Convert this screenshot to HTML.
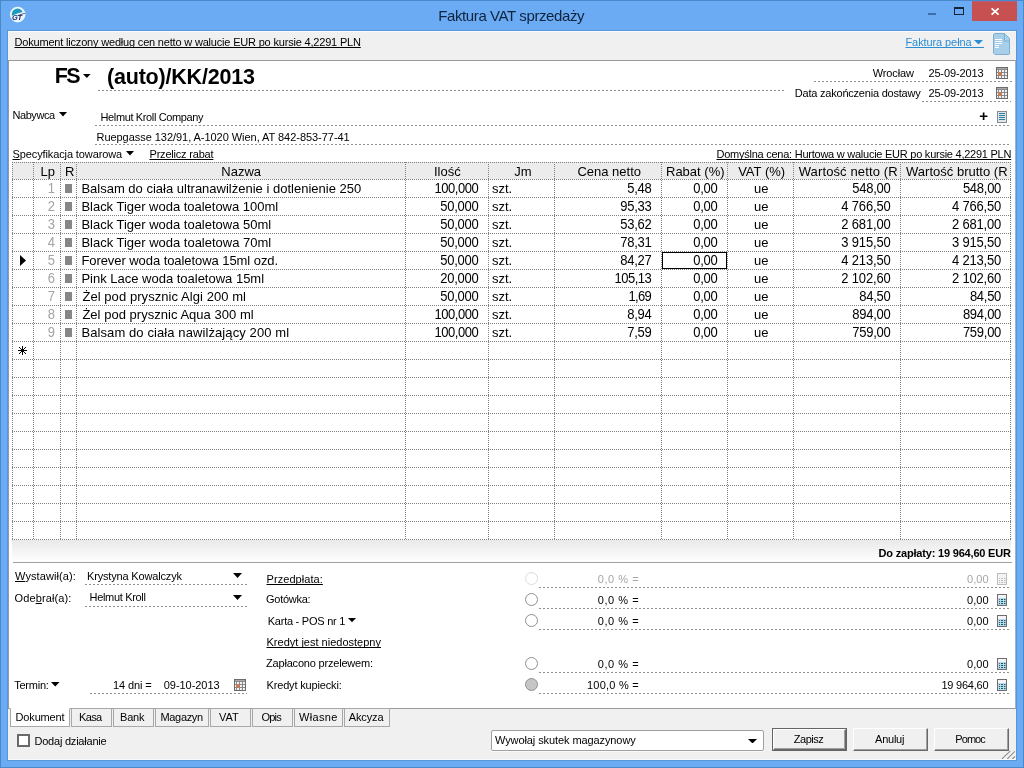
<!DOCTYPE html>
<html><head><meta charset="utf-8"><title>Faktura VAT sprzedaży</title>
<style>
html,body{margin:0;padding:0;}
body{width:1024px;height:768px;overflow:hidden;background:#6babf4;position:relative;font-family:"Liberation Sans",sans-serif;color:#000;}
*{box-sizing:border-box;}
.a{position:absolute;white-space:nowrap;}
.u{text-decoration:underline;text-decoration-thickness:1px;text-decoration-skip-ink:none;}
.dash{position:absolute;height:1px;background-image:repeating-linear-gradient(90deg,#909090 0 2px,transparent 2px 4px);}
.hl{position:absolute;height:1px;background-image:repeating-linear-gradient(90deg,#808080 0 1px,transparent 1px 2px);}
.vl{position:absolute;width:1px;background-image:repeating-linear-gradient(180deg,#808080 0 1px,transparent 1px 2px);}
.tri{position:absolute;width:0;height:0;border-left:4.5px solid transparent;border-right:4.5px solid transparent;border-top:5px solid #000;}
.btn{position:absolute;height:23px;width:75px;background:#f0f0f0;border-top:1px solid #fff;border-left:1px solid #fff;border-right:1px solid #696969;border-bottom:1px solid #696969;box-shadow:inset -1px -1px 0 #a0a0a0;}
.tab{position:absolute;top:708px;height:19px;border:1px solid #a8a8a8;background:#f0f0f0;}
.radio{position:absolute;width:13px;height:13px;border-radius:50%;border:1.5px solid #8e8e8e;background:#fff;}
</style></head><body><div id="win" style="position:absolute;left:0;top:0;width:1024px;height:768px;will-change:transform;">

<div class="a" style="left:0;top:0;width:1024px;height:768px;border:1px solid #4a88cc;"></div>
<div class="a" style="left:7px;top:30px;width:1010px;height:731px;border:1px solid #5b95d9;"></div>
<div class="a" style="left:438.30px;top:7px;font-size:15px;line-height:18px;letter-spacing:-0.400px;color:#10233c;">Faktura VAT sprzedaży</div>
<svg class="a" style="left:9px;top:6px" width="18" height="18" viewBox="0 0 18 18"><circle cx="8.7" cy="8.6" r="7.8" fill="#eaf5fd"/><path d="M3 9.700A5.700 5.700 0 0 1 13.700 5.900Q8 7 3 9.700z" fill="#1d9bbb"/><path d="M8.500 9.300L16.300 6.800L16.600 7.300L9 10z" fill="#1a2a66"/><text x="3" y="13.600" font-size="7.4" font-weight="bold" font-style="italic" fill="#1a2a66" font-family="Liberation Sans, sans-serif" letter-spacing="-0.2">GT</text></svg>
<div class="a" style="left:972px;top:1px;width:45px;height:20px;background:#c75050;border-top:1px solid #b0607c;"></div>
<svg class="a" style="left:972px;top:1px" width="45" height="20"><path d="M19.6 7.3l7 6.4M26.6 7.3l-7 6.4" stroke="#fff" stroke-width="1.8" fill="none"/></svg>
<div class="a" style="left:928px;top:13px;width:8px;height:2px;background:#3f6ea8;"></div>
<div class="a" style="left:954px;top:7px;width:10px;height:8px;border:1px solid #14243c;border-top-width:2px;"></div>
<div class="a" style="left:8px;top:31px;width:1008px;height:729px;background:#f0f0f0;"></div>
<div class="a" style="left:8px;top:31px;width:1008px;height:1px;background:#f8fcff;"></div>
<div class="a" style="left:8px;top:60px;width:1008px;height:649px;background:#fff;border:1px solid #9a9a9a;border-left-color:#8f9bab;border-right-color:#9fb3cc;"></div>
<div class="a" style="left:12px;top:540px;width:999px;height:22px;background:linear-gradient(#e9e9e9,#ffffff);"></div>
<div class="a" style="left:13px;top:562px;width:999px;height:1px;background:#a0a0a0;"></div>
<div class="a u" style="left:14.50px;top:36px;font-size:11px;line-height:13px;letter-spacing:-0.186px;">Dokument liczony według cen netto w walucie EUR po kursie 4,2291 PLN</div>
<div class="a u" style="left:905.50px;top:36px;font-size:11px;line-height:13px;letter-spacing:-0.095px;color:#2a8dd4;">Faktura pełna</div>
<svg class="a" style="left:974.3px;top:39.5px" width="9" height="4.5"><path d="M0 0h9L4.5 4.5z" fill="#2a8dd4"/></svg>
<div class="a" style="left:970px;top:47px;width:14px;height:1px;background:#2a8dd4;"></div>
<svg class="a" style="left:993px;top:33px" width="17" height="22" viewBox="0 0 17 22"><path d="M2 .5h9.500l5 5v15.500l-.8.500h-13.700l-1.500-1.500v-18.500z" fill="#a7cfea" stroke="#7eaed0"/><path d="M11.500 .5v7.500h5" fill="#a6d5f4" stroke="#7eaed0"/><path d="M2 6.500h7M2 8.500h7M2 10.500h7M2 12.500h4M2 14.500h4" stroke="#fff" stroke-width="1"/></svg>
<div class="a" style="left:54.75px;top:63px;font-size:21.5px;line-height:26px;letter-spacing:-1.583px;font-weight:bold;">FS</div>
<svg class="a" style="left:83.3px;top:74px" width="7.6" height="4"><path d="M0 0h7.6L3.8 4z" fill="#000"/></svg>
<div class="a" style="left:107.00px;top:64px;font-size:21.5px;line-height:26px;letter-spacing:-0.198px;font-weight:bold;">(auto)/KK/2013</div>
<div class="dash" style="left:98px;top:90px;width:686px;"></div>
<div class="a" style="left:872.75px;top:67px;font-size:11px;line-height:13px;letter-spacing:-0.129px;">Wrocław</div>
<div class="a" style="left:928.40px;top:67px;font-size:11px;line-height:13px;letter-spacing:-0.128px;">25-09-2013</div>
<div class="dash" style="left:814px;top:81px;width:198px;"></div>
<div class="a" style="left:794.75px;top:87px;font-size:11px;line-height:13px;letter-spacing:-0.211px;">Data zakończenia dostawy</div>
<div class="a" style="left:928.40px;top:87px;font-size:11px;line-height:13px;letter-spacing:-0.128px;">25-09-2013</div>
<div class="dash" style="left:922px;top:101px;width:89px;"></div>
<svg class="a" style="left:996px;top:67px" width="12" height="12" viewBox="0 0 12 12"><rect width="12" height="12" fill="#888"/><rect x="1" y="1" width="10" height="1" fill="#aaa"/><g fill="#f3f3f3"><rect x="1" y="3" width="1" height="2"/><rect x="3" y="3" width="2" height="2"/><rect x="6" y="3" width="2" height="2"/><rect x="9" y="3" width="2" height="2"/><rect x="1" y="6" width="1" height="2"/><rect x="3" y="6" width="2" height="2"/><rect x="6" y="6" width="2" height="2"/><rect x="9" y="6" width="2" height="2"/><rect x="1" y="9" width="1" height="2"/><rect x="3" y="9" width="2" height="2"/><rect x="6" y="9" width="2" height="2"/><rect x="9" y="9" width="2" height="2"/></g><circle cx="3.9" cy="7" r="2" fill="#d27c52"/><rect x=".5" y=".5" width="11" height="11" fill="none" stroke="#6c6c6c"/></svg>
<svg class="a" style="left:996px;top:87px" width="12" height="12" viewBox="0 0 12 12"><rect width="12" height="12" fill="#888"/><rect x="1" y="1" width="10" height="1" fill="#aaa"/><g fill="#f3f3f3"><rect x="1" y="3" width="1" height="2"/><rect x="3" y="3" width="2" height="2"/><rect x="6" y="3" width="2" height="2"/><rect x="9" y="3" width="2" height="2"/><rect x="1" y="6" width="1" height="2"/><rect x="3" y="6" width="2" height="2"/><rect x="6" y="6" width="2" height="2"/><rect x="9" y="6" width="2" height="2"/><rect x="1" y="9" width="1" height="2"/><rect x="3" y="9" width="2" height="2"/><rect x="6" y="9" width="2" height="2"/><rect x="9" y="9" width="2" height="2"/></g><circle cx="3.9" cy="7" r="2" fill="#d27c52"/><rect x=".5" y=".5" width="11" height="11" fill="none" stroke="#6c6c6c"/></svg>
<div class="a" style="left:12.50px;top:109px;font-size:11px;line-height:13px;letter-spacing:-0.437px;">Nabywca</div>
<svg class="a" style="left:59px;top:112px" width="8" height="4.5"><path d="M0 0h8L4.0 4.5z" fill="#000"/></svg>
<div class="a" style="left:100.50px;top:111px;font-size:11px;line-height:13px;letter-spacing:-0.370px;">Helmut Kroll Company</div>
<div class="dash" style="left:95px;top:125px;width:916px;"></div>
<div class="a" style="left:979.3px;top:108px;font-size:15px;line-height:16px;font-weight:bold;">+</div>
<svg class="a" style="left:997px;top:111px" width="10" height="12" viewBox="0 0 10 12"><rect x=".5" y=".5" width="9" height="11" fill="#dde7ec" stroke="#8a8a8a"/><path d="M2 2.500h6M2 4.500h6M2 6.500h6M2 8.500h6" stroke="#2d7f9f"/></svg>
<div class="a" style="left:96.50px;top:131px;font-size:11px;line-height:13px;letter-spacing:-0.044px;">Ruepgasse 132/91, A-1020 Wien, AT 842-853-77-41</div>
<div class="dash" style="left:95px;top:144px;width:916px;"></div>
<div class="a" style="left:12.50px;top:148px;font-size:11px;line-height:13px;letter-spacing:-0.113px;"><span class="u">S</span>pecyfikacja towarowa</div>
<svg class="a" style="left:126px;top:151px" width="8" height="4.5"><path d="M0 0h8L4.0 4.5z" fill="#000"/></svg>
<div class="a u" style="left:149.50px;top:148px;font-size:11px;line-height:13px;letter-spacing:-0.198px;">Przelicz rabat</div>
<div class="a u" style="left:716.50px;top:148px;font-size:11px;line-height:13px;letter-spacing:-0.247px;">Domyślna cena: Hurtowa w walucie EUR po kursie 4,2291 PLN</div>
<div class="a" style="left:12px;top:162px;width:998px;height:17px;background:#ececec;"></div>
<div class="hl" style="left:12px;top:162px;width:999px;"></div>
<div class="hl" style="left:12px;top:179px;width:999px;"></div>
<div class="hl" style="left:12px;top:197px;width:999px;"></div>
<div class="hl" style="left:12px;top:215px;width:999px;"></div>
<div class="hl" style="left:12px;top:233px;width:999px;"></div>
<div class="hl" style="left:12px;top:251px;width:999px;"></div>
<div class="hl" style="left:12px;top:269px;width:999px;"></div>
<div class="hl" style="left:12px;top:287px;width:999px;"></div>
<div class="hl" style="left:12px;top:305px;width:999px;"></div>
<div class="hl" style="left:12px;top:323px;width:999px;"></div>
<div class="hl" style="left:12px;top:341px;width:999px;"></div>
<div class="hl" style="left:12px;top:359px;width:999px;"></div>
<div class="hl" style="left:12px;top:377px;width:999px;"></div>
<div class="hl" style="left:12px;top:395px;width:999px;"></div>
<div class="hl" style="left:12px;top:413px;width:999px;"></div>
<div class="hl" style="left:12px;top:431px;width:999px;"></div>
<div class="hl" style="left:12px;top:449px;width:999px;"></div>
<div class="hl" style="left:12px;top:467px;width:999px;"></div>
<div class="hl" style="left:12px;top:485px;width:999px;"></div>
<div class="hl" style="left:12px;top:503px;width:999px;"></div>
<div class="hl" style="left:12px;top:521px;width:999px;"></div>
<div class="hl" style="left:12px;top:539px;width:999px;"></div>
<div class="vl" style="left:12px;top:162px;height:378px;"></div>
<div class="vl" style="left:33px;top:162px;height:378px;"></div>
<div class="vl" style="left:60px;top:162px;height:378px;"></div>
<div class="vl" style="left:76px;top:162px;height:378px;"></div>
<div class="vl" style="left:405px;top:162px;height:378px;"></div>
<div class="vl" style="left:488px;top:162px;height:378px;"></div>
<div class="vl" style="left:554px;top:162px;height:378px;"></div>
<div class="vl" style="left:661px;top:162px;height:378px;"></div>
<div class="vl" style="left:727px;top:162px;height:378px;"></div>
<div class="vl" style="left:793px;top:162px;height:378px;"></div>
<div class="vl" style="left:900px;top:162px;height:378px;"></div>
<div class="vl" style="left:1010px;top:162px;height:378px;"></div>
<div class="a" style="left:40.49px;top:164px;font-size:13px;line-height:15px;letter-spacing:0.000px;">Lp</div>
<div class="a" style="left:64.90px;top:164px;font-size:13px;line-height:15px;letter-spacing:0.000px;">R</div>
<div class="a" style="left:221.35px;top:164px;font-size:13px;line-height:15px;letter-spacing:0.000px;">Nazwa</div>
<div class="a" style="left:433.99px;top:164px;font-size:13px;line-height:15px;letter-spacing:0.000px;">Ilość</div>
<div class="a" style="left:514.35px;top:164px;font-size:13px;line-height:15px;letter-spacing:0.000px;">Jm</div>
<div class="a" style="left:577.41px;top:164px;font-size:13px;line-height:15px;letter-spacing:0.000px;">Cena netto</div>
<div class="a" style="left:666.01px;top:164px;font-size:13px;line-height:15px;letter-spacing:0.000px;">Rabat (%)</div>
<div class="a" style="left:738.17px;top:164px;font-size:13px;line-height:15px;letter-spacing:0.000px;">VAT (%)</div>
<div class="a" style="left:798.70px;top:164px;font-size:13px;line-height:15px;letter-spacing:0.123px;">Wartość netto (R</div>
<div class="a" style="left:906.00px;top:164px;font-size:13px;line-height:15px;letter-spacing:0.014px;">Wartość brutto (R</div>
<div class="a" style="left:47.80px;top:181px;font-size:13px;line-height:15px;letter-spacing:0.000px;color:#a4a4a4;transform:scaleY(1.111);transform-origin:0 12px;">1</div>
<div class="a" style="left:65px;top:184px;width:7px;height:9px;background:#868686;"></div>
<div class="a" style="left:81.40px;top:181px;font-size:13px;line-height:15px;letter-spacing:0.003px;">Balsam do ciała ultranawilżenie i dotlenienie 250</div>
<div class="a" style="left:434.50px;top:181px;font-size:13px;line-height:15px;letter-spacing:-0.460px;transform:scaleY(1.111);transform-origin:0 12px;">100,000</div>
<div class="a" style="left:491.90px;top:181px;font-size:13px;line-height:15px;letter-spacing:0.000px;">szt.</div>
<div class="a" style="left:627.30px;top:181px;font-size:13px;line-height:15px;letter-spacing:-0.291px;transform:scaleY(1.111);transform-origin:0 12px;">5,48</div>
<div class="a" style="left:693.30px;top:181px;font-size:13px;line-height:15px;letter-spacing:-0.291px;transform:scaleY(1.111);transform-origin:0 12px;">0,00</div>
<div class="a" style="left:754.09px;top:181px;font-size:13px;line-height:15px;letter-spacing:0.000px;">ue</div>
<div class="a" style="left:852.30px;top:181px;font-size:13px;line-height:15px;letter-spacing:-0.266px;transform:scaleY(1.111);transform-origin:0 12px;">548,00</div>
<div class="a" style="left:962.90px;top:181px;font-size:13px;line-height:15px;letter-spacing:-0.266px;transform:scaleY(1.111);transform-origin:0 12px;">548,00</div>
<div class="a" style="left:47.80px;top:199px;font-size:13px;line-height:15px;letter-spacing:0.000px;color:#a4a4a4;transform:scaleY(1.111);transform-origin:0 12px;">2</div>
<div class="a" style="left:65px;top:202px;width:7px;height:9px;background:#868686;"></div>
<div class="a" style="left:81.40px;top:199px;font-size:13px;line-height:15px;letter-spacing:-0.017px;">Black Tiger woda toaletowa 100ml</div>
<div class="a" style="left:440.30px;top:199px;font-size:13px;line-height:15px;letter-spacing:-0.266px;transform:scaleY(1.111);transform-origin:0 12px;">50,000</div>
<div class="a" style="left:491.90px;top:199px;font-size:13px;line-height:15px;letter-spacing:0.000px;">szt.</div>
<div class="a" style="left:620.30px;top:199px;font-size:13px;line-height:15px;letter-spacing:-0.275px;transform:scaleY(1.111);transform-origin:0 12px;">95,33</div>
<div class="a" style="left:693.30px;top:199px;font-size:13px;line-height:15px;letter-spacing:-0.291px;transform:scaleY(1.111);transform-origin:0 12px;">0,00</div>
<div class="a" style="left:754.09px;top:199px;font-size:13px;line-height:15px;letter-spacing:0.000px;">ue</div>
<div class="a" style="left:841.30px;top:199px;font-size:13px;line-height:15px;letter-spacing:-0.168px;transform:scaleY(1.111);transform-origin:0 12px;">4 766,50</div>
<div class="a" style="left:951.90px;top:199px;font-size:13px;line-height:15px;letter-spacing:-0.168px;transform:scaleY(1.111);transform-origin:0 12px;">4 766,50</div>
<div class="a" style="left:47.80px;top:217px;font-size:13px;line-height:15px;letter-spacing:0.000px;color:#a4a4a4;transform:scaleY(1.111);transform-origin:0 12px;">3</div>
<div class="a" style="left:65px;top:220px;width:7px;height:9px;background:#868686;"></div>
<div class="a" style="left:81.40px;top:217px;font-size:13px;line-height:15px;letter-spacing:-0.010px;">Black Tiger woda toaletowa 50ml</div>
<div class="a" style="left:440.30px;top:217px;font-size:13px;line-height:15px;letter-spacing:-0.266px;transform:scaleY(1.111);transform-origin:0 12px;">50,000</div>
<div class="a" style="left:491.90px;top:217px;font-size:13px;line-height:15px;letter-spacing:0.000px;">szt.</div>
<div class="a" style="left:620.30px;top:217px;font-size:13px;line-height:15px;letter-spacing:-0.275px;transform:scaleY(1.111);transform-origin:0 12px;">53,62</div>
<div class="a" style="left:693.30px;top:217px;font-size:13px;line-height:15px;letter-spacing:-0.291px;transform:scaleY(1.111);transform-origin:0 12px;">0,00</div>
<div class="a" style="left:754.09px;top:217px;font-size:13px;line-height:15px;letter-spacing:0.000px;">ue</div>
<div class="a" style="left:841.30px;top:217px;font-size:13px;line-height:15px;letter-spacing:-0.168px;transform:scaleY(1.111);transform-origin:0 12px;">2 681,00</div>
<div class="a" style="left:951.90px;top:217px;font-size:13px;line-height:15px;letter-spacing:-0.168px;transform:scaleY(1.111);transform-origin:0 12px;">2 681,00</div>
<div class="a" style="left:47.80px;top:235px;font-size:13px;line-height:15px;letter-spacing:0.000px;color:#a4a4a4;transform:scaleY(1.111);transform-origin:0 12px;">4</div>
<div class="a" style="left:65px;top:238px;width:7px;height:9px;background:#868686;"></div>
<div class="a" style="left:81.40px;top:235px;font-size:13px;line-height:15px;letter-spacing:-0.010px;">Black Tiger woda toaletowa 70ml</div>
<div class="a" style="left:440.30px;top:235px;font-size:13px;line-height:15px;letter-spacing:-0.266px;transform:scaleY(1.111);transform-origin:0 12px;">50,000</div>
<div class="a" style="left:491.90px;top:235px;font-size:13px;line-height:15px;letter-spacing:0.000px;">szt.</div>
<div class="a" style="left:620.30px;top:235px;font-size:13px;line-height:15px;letter-spacing:-0.275px;transform:scaleY(1.111);transform-origin:0 12px;">78,31</div>
<div class="a" style="left:693.30px;top:235px;font-size:13px;line-height:15px;letter-spacing:-0.291px;transform:scaleY(1.111);transform-origin:0 12px;">0,00</div>
<div class="a" style="left:754.09px;top:235px;font-size:13px;line-height:15px;letter-spacing:0.000px;">ue</div>
<div class="a" style="left:841.30px;top:235px;font-size:13px;line-height:15px;letter-spacing:-0.168px;transform:scaleY(1.111);transform-origin:0 12px;">3 915,50</div>
<div class="a" style="left:951.90px;top:235px;font-size:13px;line-height:15px;letter-spacing:-0.168px;transform:scaleY(1.111);transform-origin:0 12px;">3 915,50</div>
<div class="a" style="left:47.80px;top:253px;font-size:13px;line-height:15px;letter-spacing:0.000px;color:#a4a4a4;transform:scaleY(1.111);transform-origin:0 12px;">5</div>
<div class="a" style="left:65px;top:256px;width:7px;height:9px;background:#868686;"></div>
<div class="a" style="left:81.40px;top:253px;font-size:13px;line-height:15px;letter-spacing:-0.065px;">Forever woda toaletowa 15ml ozd.</div>
<div class="a" style="left:440.30px;top:253px;font-size:13px;line-height:15px;letter-spacing:-0.266px;transform:scaleY(1.111);transform-origin:0 12px;">50,000</div>
<div class="a" style="left:491.90px;top:253px;font-size:13px;line-height:15px;letter-spacing:0.000px;">szt.</div>
<div class="a" style="left:620.30px;top:253px;font-size:13px;line-height:15px;letter-spacing:-0.275px;transform:scaleY(1.111);transform-origin:0 12px;">84,27</div>
<div class="a" style="left:693.30px;top:253px;font-size:13px;line-height:15px;letter-spacing:-0.291px;transform:scaleY(1.111);transform-origin:0 12px;">0,00</div>
<div class="a" style="left:754.09px;top:253px;font-size:13px;line-height:15px;letter-spacing:0.000px;">ue</div>
<div class="a" style="left:841.30px;top:253px;font-size:13px;line-height:15px;letter-spacing:-0.168px;transform:scaleY(1.111);transform-origin:0 12px;">4 213,50</div>
<div class="a" style="left:951.90px;top:253px;font-size:13px;line-height:15px;letter-spacing:-0.168px;transform:scaleY(1.111);transform-origin:0 12px;">4 213,50</div>
<div class="a" style="left:47.80px;top:271px;font-size:13px;line-height:15px;letter-spacing:0.000px;color:#a4a4a4;transform:scaleY(1.111);transform-origin:0 12px;">6</div>
<div class="a" style="left:65px;top:274px;width:7px;height:9px;background:#868686;"></div>
<div class="a" style="left:81.40px;top:271px;font-size:13px;line-height:15px;letter-spacing:-0.005px;">Pink Lace woda toaletowa 15ml</div>
<div class="a" style="left:440.30px;top:271px;font-size:13px;line-height:15px;letter-spacing:-0.266px;transform:scaleY(1.111);transform-origin:0 12px;">20,000</div>
<div class="a" style="left:491.90px;top:271px;font-size:13px;line-height:15px;letter-spacing:0.000px;">szt.</div>
<div class="a" style="left:614.50px;top:271px;font-size:13px;line-height:15px;letter-spacing:-0.506px;transform:scaleY(1.111);transform-origin:0 12px;">105,13</div>
<div class="a" style="left:693.30px;top:271px;font-size:13px;line-height:15px;letter-spacing:-0.291px;transform:scaleY(1.111);transform-origin:0 12px;">0,00</div>
<div class="a" style="left:754.09px;top:271px;font-size:13px;line-height:15px;letter-spacing:0.000px;">ue</div>
<div class="a" style="left:841.30px;top:271px;font-size:13px;line-height:15px;letter-spacing:-0.168px;transform:scaleY(1.111);transform-origin:0 12px;">2 102,60</div>
<div class="a" style="left:951.90px;top:271px;font-size:13px;line-height:15px;letter-spacing:-0.168px;transform:scaleY(1.111);transform-origin:0 12px;">2 102,60</div>
<div class="a" style="left:47.80px;top:289px;font-size:13px;line-height:15px;letter-spacing:0.000px;color:#a4a4a4;transform:scaleY(1.111);transform-origin:0 12px;">7</div>
<div class="a" style="left:65px;top:292px;width:7px;height:9px;background:#868686;"></div>
<div class="a" style="left:82.40px;top:289px;font-size:13px;line-height:15px;letter-spacing:0.064px;">Żel pod prysznic Algi 200 ml</div>
<div class="a" style="left:440.30px;top:289px;font-size:13px;line-height:15px;letter-spacing:-0.266px;transform:scaleY(1.111);transform-origin:0 12px;">50,000</div>
<div class="a" style="left:491.90px;top:289px;font-size:13px;line-height:15px;letter-spacing:0.000px;">szt.</div>
<div class="a" style="left:628.50px;top:289px;font-size:13px;line-height:15px;letter-spacing:-0.691px;transform:scaleY(1.111);transform-origin:0 12px;">1,69</div>
<div class="a" style="left:693.30px;top:289px;font-size:13px;line-height:15px;letter-spacing:-0.291px;transform:scaleY(1.111);transform-origin:0 12px;">0,00</div>
<div class="a" style="left:754.09px;top:289px;font-size:13px;line-height:15px;letter-spacing:0.000px;">ue</div>
<div class="a" style="left:859.30px;top:289px;font-size:13px;line-height:15px;letter-spacing:-0.275px;transform:scaleY(1.111);transform-origin:0 12px;">84,50</div>
<div class="a" style="left:969.90px;top:289px;font-size:13px;line-height:15px;letter-spacing:-0.275px;transform:scaleY(1.111);transform-origin:0 12px;">84,50</div>
<div class="a" style="left:47.80px;top:307px;font-size:13px;line-height:15px;letter-spacing:0.000px;color:#a4a4a4;transform:scaleY(1.111);transform-origin:0 12px;">8</div>
<div class="a" style="left:65px;top:310px;width:7px;height:9px;background:#868686;"></div>
<div class="a" style="left:82.40px;top:307px;font-size:13px;line-height:15px;letter-spacing:0.027px;">Żel pod prysznic Aqua 300 ml</div>
<div class="a" style="left:434.50px;top:307px;font-size:13px;line-height:15px;letter-spacing:-0.460px;transform:scaleY(1.111);transform-origin:0 12px;">100,000</div>
<div class="a" style="left:491.90px;top:307px;font-size:13px;line-height:15px;letter-spacing:0.000px;">szt.</div>
<div class="a" style="left:627.30px;top:307px;font-size:13px;line-height:15px;letter-spacing:-0.291px;transform:scaleY(1.111);transform-origin:0 12px;">8,94</div>
<div class="a" style="left:693.30px;top:307px;font-size:13px;line-height:15px;letter-spacing:-0.291px;transform:scaleY(1.111);transform-origin:0 12px;">0,00</div>
<div class="a" style="left:754.09px;top:307px;font-size:13px;line-height:15px;letter-spacing:0.000px;">ue</div>
<div class="a" style="left:852.30px;top:307px;font-size:13px;line-height:15px;letter-spacing:-0.266px;transform:scaleY(1.111);transform-origin:0 12px;">894,00</div>
<div class="a" style="left:962.90px;top:307px;font-size:13px;line-height:15px;letter-spacing:-0.266px;transform:scaleY(1.111);transform-origin:0 12px;">894,00</div>
<div class="a" style="left:47.80px;top:325px;font-size:13px;line-height:15px;letter-spacing:0.000px;color:#a4a4a4;transform:scaleY(1.111);transform-origin:0 12px;">9</div>
<div class="a" style="left:65px;top:328px;width:7px;height:9px;background:#868686;"></div>
<div class="a" style="left:81.40px;top:325px;font-size:13px;line-height:15px;letter-spacing:0.097px;">Balsam do ciała nawilżający 200 ml</div>
<div class="a" style="left:434.50px;top:325px;font-size:13px;line-height:15px;letter-spacing:-0.460px;transform:scaleY(1.111);transform-origin:0 12px;">100,000</div>
<div class="a" style="left:491.90px;top:325px;font-size:13px;line-height:15px;letter-spacing:0.000px;">szt.</div>
<div class="a" style="left:627.30px;top:325px;font-size:13px;line-height:15px;letter-spacing:-0.291px;transform:scaleY(1.111);transform-origin:0 12px;">7,59</div>
<div class="a" style="left:693.30px;top:325px;font-size:13px;line-height:15px;letter-spacing:-0.291px;transform:scaleY(1.111);transform-origin:0 12px;">0,00</div>
<div class="a" style="left:754.09px;top:325px;font-size:13px;line-height:15px;letter-spacing:0.000px;">ue</div>
<div class="a" style="left:852.30px;top:325px;font-size:13px;line-height:15px;letter-spacing:-0.266px;transform:scaleY(1.111);transform-origin:0 12px;">759,00</div>
<div class="a" style="left:962.90px;top:325px;font-size:13px;line-height:15px;letter-spacing:-0.266px;transform:scaleY(1.111);transform-origin:0 12px;">759,00</div>
<svg class="a" style="left:20px;top:255px" width="6" height="11"><path d="M0 0L6 5.500L0 11z" fill="#000"/></svg>
<div class="a" style="left:662px;top:252px;width:65px;height:17px;border:1px solid #000;"></div>
<svg class="a" style="left:18px;top:346px" width="9" height="9" shape-rendering="crispEdges"><path d="M0 4.500h9M4.500 0v9" stroke="#000"/><rect x="3" y="3" width="3" height="3"/><path d="M1 1h1v1h-1zM2 2h1v1h-1zM7 1h1v1h-1zM6 2h1v1h-1zM1 7h1v1h-1zM2 6h1v1h-1zM7 7h1v1h-1zM6 6h1v1h-1z"/></svg>
<div class="a" style="left:878.60px;top:547px;font-size:11px;line-height:13px;letter-spacing:-0.192px;font-weight:bold;">Do zapłaty: 19 964,60 EUR</div>
<div class="a" style="left:15.00px;top:570px;font-size:11px;line-height:13px;letter-spacing:0.092px;"><span class="u">W</span>ystawił(a):</div>
<div class="a" style="left:87.00px;top:570px;font-size:11px;line-height:13px;letter-spacing:-0.165px;">Krystyna Kowalczyk</div>
<svg class="a" style="left:232.7px;top:573px" width="9" height="5"><path d="M0 0h9L4.5 5z" fill="#000"/></svg>
<div class="dash" style="left:85px;top:584px;width:164px;"></div>
<div class="a" style="left:14.50px;top:592px;font-size:11px;line-height:13px;letter-spacing:0.117px;">Ode<span class="u">b</span>rał(a):</div>
<div class="a" style="left:89.50px;top:591px;font-size:11px;line-height:13px;letter-spacing:-0.315px;">Helmut Kroll</div>
<svg class="a" style="left:232.7px;top:595px" width="9" height="5"><path d="M0 0h9L4.5 5z" fill="#000"/></svg>
<div class="dash" style="left:85px;top:606px;width:164px;"></div>
<div class="a" style="left:14.25px;top:679px;font-size:11px;line-height:13px;letter-spacing:-0.251px;">Termin:</div>
<svg class="a" style="left:51.3px;top:682px" width="8.5" height="4.5"><path d="M0 0h8.5L4.25 4.5z" fill="#000"/></svg>
<div class="a" style="left:113.00px;top:679px;font-size:11px;line-height:13px;letter-spacing:-0.111px;">14 dni =</div>
<div class="a" style="left:163.75px;top:679px;font-size:11px;line-height:13px;letter-spacing:-0.044px;">09-10-2013</div>
<div class="dash" style="left:90px;top:693px;width:157px;"></div>
<svg class="a" style="left:234px;top:679px" width="12" height="12" viewBox="0 0 12 12"><rect width="12" height="12" fill="#888"/><rect x="1" y="1" width="10" height="1" fill="#aaa"/><g fill="#f3f3f3"><rect x="1" y="3" width="1" height="2"/><rect x="3" y="3" width="2" height="2"/><rect x="6" y="3" width="2" height="2"/><rect x="9" y="3" width="2" height="2"/><rect x="1" y="6" width="1" height="2"/><rect x="3" y="6" width="2" height="2"/><rect x="6" y="6" width="2" height="2"/><rect x="9" y="6" width="2" height="2"/><rect x="1" y="9" width="1" height="2"/><rect x="3" y="9" width="2" height="2"/><rect x="6" y="9" width="2" height="2"/><rect x="9" y="9" width="2" height="2"/></g><circle cx="3.9" cy="7" r="2" fill="#d27c52"/><rect x=".5" y=".5" width="11" height="11" fill="none" stroke="#6c6c6c"/></svg>
<div class="a u" style="left:266.50px;top:573px;font-size:11px;line-height:13px;letter-spacing:0.066px;">Przedpłata:</div>
<div class="a" style="left:597.75px;top:573px;font-size:11px;line-height:13px;letter-spacing:0.553px;color:#a6a6a6;">0,0 % =</div>
<div class="a" style="left:967.00px;top:573px;font-size:11px;line-height:13px;letter-spacing:0.036px;color:#a6a6a6;">0,00</div>
<div class="radio" style="left:524.5px;top:571.5px;border-color:#dcdcdc;background:#fff;"></div>
<div class="dash" style="left:539px;top:587px;width:472px;"></div>
<svg class="a" style="left:997px;top:573px" width="10" height="12" viewBox="0 0 10 12"><rect x=".5" y=".5" width="9" height="11" fill="#f4f4f4" stroke="#bcbcbc"/><path d="M2 5.500h1M4 5.500h2M7 5.500h1.500M2 7.500h1M4 7.500h2M7 7.500h1.500M2 9.500h1M4 9.500h2M7 9.500h1.500" stroke="#bebebe"/></svg>
<div class="a" style="left:266.00px;top:593px;font-size:11px;line-height:13px;letter-spacing:-0.273px;">Gotówka:</div>
<div class="a" style="left:597.75px;top:594px;font-size:11px;line-height:13px;letter-spacing:0.553px;">0,0 % =</div>
<div class="a" style="left:967.00px;top:594px;font-size:11px;line-height:13px;letter-spacing:0.036px;">0,00</div>
<div class="radio" style="left:524.5px;top:592.5px;border-color:#909090;background:#fff;"></div>
<div class="dash" style="left:539px;top:608px;width:472px;"></div>
<svg class="a" style="left:997px;top:594px" width="10" height="12" viewBox="0 0 10 12"><rect x=".5" y=".5" width="9" height="11" fill="#f4f4f4" stroke="#6e6e6e"/><rect x="1" y="4" width="8" height="7" fill="#b4dcec"/><path d="M4 5.500h2M7 5.500h1.500M2 7.500h1M4 7.500h2M7 7.500h1.500M2 9.500h1M4 9.500h2M7 9.500h1.500" stroke="#1f5a6a"/><path d="M2 5.500h1" stroke="#d04030"/></svg>
<div class="a" style="left:267.75px;top:615px;font-size:11px;line-height:13px;letter-spacing:-0.246px;">Karta - POS nr 1</div>
<div class="a" style="left:597.75px;top:615px;font-size:11px;line-height:13px;letter-spacing:0.553px;">0,0 % =</div>
<div class="a" style="left:967.00px;top:615px;font-size:11px;line-height:13px;letter-spacing:0.036px;">0,00</div>
<div class="radio" style="left:524.5px;top:613.5px;border-color:#909090;background:#fff;"></div>
<div class="dash" style="left:539px;top:629px;width:472px;"></div>
<svg class="a" style="left:997px;top:615px" width="10" height="12" viewBox="0 0 10 12"><rect x=".5" y=".5" width="9" height="11" fill="#f4f4f4" stroke="#6e6e6e"/><rect x="1" y="4" width="8" height="7" fill="#b4dcec"/><path d="M4 5.500h2M7 5.500h1.500M2 7.500h1M4 7.500h2M7 7.500h1.500M2 9.500h1M4 9.500h2M7 9.500h1.500" stroke="#1f5a6a"/><path d="M2 5.500h1" stroke="#d04030"/></svg>
<div class="a u" style="left:266.50px;top:636px;font-size:11px;line-height:13px;letter-spacing:0.007px;">Kredyt jest niedostępny</div>
<div class="a" style="left:266.00px;top:657px;font-size:11px;line-height:13px;letter-spacing:-0.190px;">Zapłacono przelewem:</div>
<div class="a" style="left:597.75px;top:658px;font-size:11px;line-height:13px;letter-spacing:0.553px;">0,0 % =</div>
<div class="a" style="left:967.00px;top:658px;font-size:11px;line-height:13px;letter-spacing:0.036px;">0,00</div>
<div class="radio" style="left:524.5px;top:656.5px;border-color:#909090;background:#fff;"></div>
<div class="dash" style="left:539px;top:672px;width:472px;"></div>
<svg class="a" style="left:997px;top:658px" width="10" height="12" viewBox="0 0 10 12"><rect x=".5" y=".5" width="9" height="11" fill="#f4f4f4" stroke="#6e6e6e"/><rect x="1" y="4" width="8" height="7" fill="#b4dcec"/><path d="M4 5.500h2M7 5.500h1.500M2 7.500h1M4 7.500h2M7 7.500h1.500M2 9.500h1M4 9.500h2M7 9.500h1.500" stroke="#1f5a6a"/><path d="M2 5.500h1" stroke="#d04030"/></svg>
<div class="a" style="left:266.50px;top:679px;font-size:11px;line-height:13px;letter-spacing:-0.156px;">Kredyt kupiecki:</div>
<div class="a" style="left:587.00px;top:679px;font-size:11px;line-height:13px;letter-spacing:0.229px;">100,0 % =</div>
<div class="a" style="left:941.40px;top:679px;font-size:11px;line-height:13px;letter-spacing:-0.227px;">19 964,60</div>
<div class="radio" style="left:524.5px;top:677.5px;border-color:#909090;background:#c6c6c6;"></div>
<div class="dash" style="left:539px;top:693px;width:472px;"></div>
<svg class="a" style="left:997px;top:679px" width="10" height="12" viewBox="0 0 10 12"><rect x=".5" y=".5" width="9" height="11" fill="#f4f4f4" stroke="#6e6e6e"/><rect x="1" y="4" width="8" height="7" fill="#b4dcec"/><path d="M4 5.500h2M7 5.500h1.500M2 7.500h1M4 7.500h2M7 7.500h1.500M2 9.500h1M4 9.500h2M7 9.500h1.500" stroke="#1f5a6a"/><path d="M2 5.500h1" stroke="#d04030"/></svg>
<svg class="a" style="left:347.7px;top:618.3px" width="8" height="4.2"><path d="M0 0h8L4.0 4.2z" fill="#000"/></svg>
<div class="tab" style="left:10px;width:60px;background:#fff;border-top:1px solid #fff;"></div>
<div class="a" style="left:15.60px;top:711px;font-size:11px;line-height:13px;letter-spacing:-0.168px;">Dokument</div>
<div class="tab" style="left:71px;width:41px;"></div>
<div class="a" style="left:79.00px;top:711px;font-size:11px;line-height:13px;letter-spacing:-0.652px;">Kasa</div>
<div class="tab" style="left:113px;width:41px;"></div>
<div class="a" style="left:120.00px;top:711px;font-size:11px;line-height:13px;letter-spacing:-0.191px;">Bank</div>
<div class="tab" style="left:155px;width:54px;"></div>
<div class="a" style="left:160.50px;top:711px;font-size:11px;line-height:13px;letter-spacing:-0.336px;">Magazyn</div>
<div class="tab" style="left:210px;width:41px;"></div>
<div class="a" style="left:219.10px;top:711px;font-size:11px;line-height:13px;letter-spacing:-0.071px;">VAT</div>
<div class="tab" style="left:252px;width:41px;"></div>
<div class="a" style="left:261.60px;top:711px;font-size:11px;line-height:13px;letter-spacing:-0.839px;">Opis</div>
<div class="tab" style="left:294px;width:49px;"></div>
<div class="a" style="left:299.00px;top:711px;font-size:11px;line-height:13px;letter-spacing:0.338px;">Własne</div>
<div class="tab" style="left:344px;width:46px;"></div>
<div class="a" style="left:348.75px;top:711px;font-size:11px;line-height:13px;letter-spacing:-0.117px;">Akcyza</div>
<div class="a" style="left:17px;top:734px;width:13px;height:13px;border:2px solid #6a6a6a;background:#fff;"></div>
<div class="a" style="left:34.50px;top:735px;font-size:11px;line-height:13px;letter-spacing:-0.221px;">Dodaj działanie</div>
<div class="a" style="left:491px;top:730px;width:273px;height:21px;border:1px solid #a0a0a0;border-radius:2px;background:#fff;box-shadow:0 1px 0 #fafafa;"></div>
<div class="a" style="left:495.00px;top:734px;font-size:11px;line-height:13px;letter-spacing:-0.092px;">Wywołaj skutek magazynowy</div>
<svg class="a" style="left:747.8px;top:738.5px" width="9" height="4.5"><path d="M0 0h9L4.5 4.5z" fill="#000"/></svg>
<div class="a" style="left:772px;top:728px;width:75px;height:23px;background:#646464;"></div>
<div class="btn" style="left:773px;top:729px;width:73px;height:21px;"></div>
<div class="btn" style="left:853px;top:728px;"></div>
<div class="btn" style="left:934px;top:728px;"></div>
<div class="a" style="left:793.80px;top:733px;font-size:11px;line-height:13px;letter-spacing:-0.500px;">Zapisz</div>
<div class="a" style="left:875.10px;top:733px;font-size:11px;line-height:13px;letter-spacing:-0.247px;">Anuluj</div>
<div class="a" style="left:955.30px;top:733px;font-size:11px;line-height:13px;letter-spacing:-0.934px;">Pomoc</div>
<svg class="a" style="left:1001px;top:750px" width="15" height="10"><path d="M1 9L9.500 1M6.300 9L14 1.300M11.300 9L14 6.300" stroke="#8c8c8c" stroke-width="1.100" fill="none"/><path d="M2.200 9.200L10.500 1.200M7.500 9.200L14.500 2.300" stroke="#fff" stroke-width="0.800" fill="none"/></svg>
<div class="a" style="left:8px;top:759px;width:1008px;height:1px;background:#f6fbff;"></div>
</div></body></html>
